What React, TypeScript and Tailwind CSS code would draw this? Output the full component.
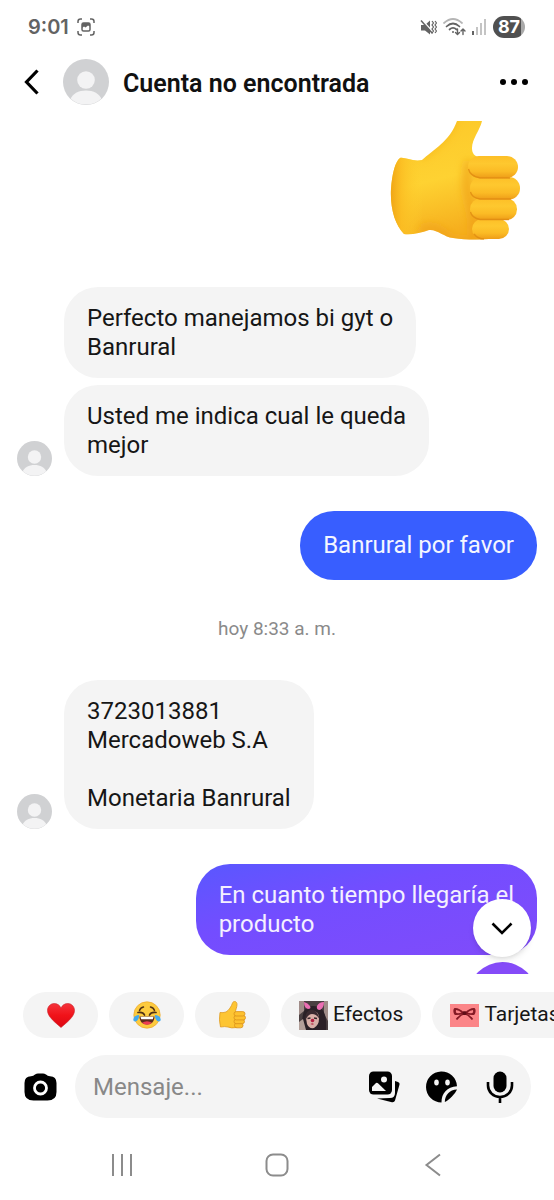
import React from "react";

function Avatar({ className }: { className: string }) {
  return (
    <svg viewBox="0 0 46 46" className={className} role="img" aria-label="Foto de perfil">
      <defs>
        <clipPath id="avatar-clip">
          <circle cx="23" cy="23" r="22.6" />
        </clipPath>
      </defs>
      <circle cx="23" cy="23" r="23" fill="#d0d1d3" />
      <g clipPath="url(#avatar-clip)" fill="#f3f3f4">
        <circle cx="23" cy="21" r="8.8" />
        <path d="M7 41c2.500-6.500 8.500-9.500 16-9.500S36.500 34.500 39 41c-2 4-10 6-16 6S9 45 7 41z" />
      </g>
    </svg>
  );
}

const handOutline =
  "M10 37C15 36 23 41 32 39C43 29 60 20 67 0L71-12L95-12L92 0C90 9 82 18 82 27C82 32 84 35 90 37L108 100L108 117C91 119 78 119 63 117C54 116 47 108 39 109C31 112 21 114 14 113C5 104 0 87 1 68C2 53 5 41 10 37Z";

function BigThumb({ className }: { className: string }) {
  return (
    <svg viewBox="0 0 130 119" className={className} role="img" aria-label="Pulgar arriba">
      <defs>
        <linearGradient id="hand" x1="0" y1="0" x2="0.2" y2="1">
          <stop offset="0" stopColor="#fcc526" />
          <stop offset="0.6" stopColor="#fed232" />
          <stop offset="1" stopColor="#f6b01e" />
        </linearGradient>
        <linearGradient id="cuff" x1="0" y1="0" x2="1" y2="0">
          <stop offset="0" stopColor="#f0a616" />
          <stop offset="0.1" stopColor="#fbbd22" stopOpacity="0.8" />
          <stop offset="0.3" stopColor="#fed32f" stopOpacity="0" />
        </linearGradient>
        <linearGradient id="finger" x1="0" y1="0" x2="0" y2="1">
          <stop offset="0" stopColor="#fdbf27" />
          <stop offset="0.35" stopColor="#fec82f" />
          <stop offset="0.7" stopColor="#fbbb25" />
          <stop offset="1" stopColor="#ee9d18" />
        </linearGradient>
        <filter id="soft" x="-30%" y="-30%" width="160%" height="160%">
          <feGaussianBlur stdDeviation="4" />
        </filter>
        <clipPath id="hand-clip">
          <path d={handOutline} />
        </clipPath>
      </defs>
      <path d={handOutline} fill="url(#hand)" />
      <path d={handOutline} fill="url(#cuff)" />
      <g clipPath="url(#hand-clip)">
        <g filter="url(#soft)" fill="none" stroke="#ee9d18">
          <path d="M80 40Q74 60 80 80T84 120" strokeWidth="9" opacity="0.7" />
          <path d="M30 111Q42 100 60 119L90 121" strokeWidth="7" opacity="0.7" />
          <path d="M30 37Q58 20 66-4" strokeWidth="3" opacity="0.7" />
        </g>
      </g>
      <g fill="url(#finger)">
        <rect x="82" y="98" width="37" height="20" rx="10" />
        <rect x="80" y="77.500" width="47" height="21.500" rx="10.500" />
        <rect x="80" y="56" width="50" height="22.500" rx="11" />
        <rect x="78" y="35" width="50" height="22" rx="11" />
      </g>
      <path
        d="M120 57H90Q80 55 78.500 48M121 78H90Q82 77 80.500 71M119 98.500H90Q82 97 80.500 91M84 113Q88 118 94 118"
        fill="none"
        stroke="#dd8810"
        strokeWidth="1.300"
        opacity="0.75"
      />
    </svg>
  );
}

function SmallThumb() {
  return (
    <svg viewBox="0 0 27 28" className="h-7 w-[27px]" role="img" aria-label="Pulgar arriba">
      <path
        d="M1 11.500Q4 12 7 11C10 9.500 12.500 5 13.500 2 14.500-.500 18 0 18 3.500c0 3-1.500 5-1.500 7.500L18 12v14.500q-6 1-9-.500-3-.800-7.500 0Q-.300 19 1 11.500z"
        fill="#fdc533"
        stroke="#e09a20"
        strokeWidth=".8"
      />
      <g fill="#fdc12f" stroke="#d9911b" strokeWidth=".8">
        <rect x="15.500" y="22" width="8.500" height="4.800" rx="2.300" />
        <rect x="15" y="18.300" width="10.500" height="4.400" rx="2.200" />
        <rect x="15" y="14.500" width="11.500" height="4.400" rx="2.200" />
        <rect x="15" y="10.600" width="11" height="4.400" rx="2.200" />
      </g>
    </svg>
  );
}

function Bubble({ children, className = "" }: { children: React.ReactNode; className?: string }) {
  return (
    <p className={`w-fit whitespace-pre-line rounded-[34px] px-[23px] text-2xl leading-[29px] ${className}`}>
      {children}
    </p>
  );
}

function Incoming({ messages }: { messages: string[] }) {
  return (
    <div className="flex items-end gap-3">
      <Avatar className="size-[35px] shrink-0" />
      <div className="flex flex-col gap-[7px]">
        {messages.map((m) => (
          <Bubble key={m} className="bg-[#f4f4f4] pb-4 pt-[17px] text-[#161616]">
            {m}
          </Bubble>
        ))}
      </div>
    </div>
  );
}

function StatusBar() {
  return (
    <div className="flex h-[54px] shrink-0 items-center justify-between pl-7 pr-[29px] font-['Inter',sans-serif] text-[#636363]">
      <div className="flex items-center gap-2">
        <span className="text-xl font-semibold">9:01</span>
        <svg viewBox="0 0 18 18" className="size-[18px]" fill="none" stroke="currentColor" strokeWidth="1.500" aria-hidden="true">
          <path d="M1 5V3.500Q1 1 3.500 1H5M13 1h1.500Q17 1 17 3.500V5M17 13v1.500Q17 17 14.500 17H13M5 17H3.500Q1 17 1 14.500V13" />
          <rect x="5" y="5" width="8" height="8" rx="1.500" />
          <path d="M5 5h8v3.500L11 7.500 8.500 9.500 7 8.500 5 10z" fill="currentColor" stroke="none" />
        </svg>
      </div>
      <div className="flex items-center gap-[6px]">
        <svg viewBox="0 0 17 17" className="size-[17px]" aria-hidden="true">
          <path d="M1 6h4l5-4.500v14L5 11.500H1z" fill="currentColor" />
          <path d="M2 1l12 13" stroke="#fff" strokeWidth="1.500" />
          <path d="M1 1.500l11.500 13" stroke="currentColor" strokeWidth="1.500" />
          <path d="M12 2l1.500 2L12 6l1.500 2L12 10l1.500 2L12 14M15 2l1.500 2L15 6l1.500 2L15 10l1.500 2L15 14" fill="none" stroke="currentColor" strokeWidth="1.200" />
        </svg>
        <svg viewBox="0 0 23 18" className="h-[18px] w-[23px]" fill="none" stroke="currentColor" strokeWidth="1.700" strokeLinecap="round" aria-hidden="true">
          <path d="M1 5Q10-3 19 5" stroke="#b5b5b5" />
          <path d="M3.500 8.500q6.500-6 13 0M6.500 11.500q3.500-3.200 7 0" />
          <circle cx="10" cy="14" r="1" fill="currentColor" stroke="none" />
          <path d="M14.500 11v5.500m-2-2 2 2 2-2M20 16.500V11m-2 2 2-2 2 2" strokeWidth="1.400" />
        </svg>
        <svg viewBox="0 0 15 16" className="h-4 w-[15px]" fill="#c4c4c4" aria-hidden="true">
          <rect x="0" y="12" width="2" height="4" fill="#636363" />
          <rect x="4" y="8" width="2" height="8" />
          <rect x="8" y="4" width="2" height="12" />
          <rect x="12" y="0" width="2" height="16" />
        </svg>
        <div className="flex h-[22px] w-8 items-center justify-center rounded-full bg-[linear-gradient(to_right,#505050_88%,#a9a9a9_88%)] text-lg font-bold text-white">
          87
        </div>
      </div>
    </div>
  );
}

function Heart() {
  return (
    <svg viewBox="0 0 28 25" className="h-[25px] w-7" role="img" aria-label="Corazón">
      <defs>
        <linearGradient id="heart" x1="0" y1="0" x2="0" y2="1">
          <stop offset="0" stopColor="#f5333b" />
          <stop offset="0.5" stopColor="#f01219" />
          <stop offset="1" stopColor="#dc0812" />
        </linearGradient>
      </defs>
      <path d="M14 24.500C9 20 .500 14 .500 7.500.500 3.500 3.500.500 7.200.500 10.500.500 13 2.500 14 5c1-2.500 3.500-4.500 6.800-4.500 3.700 0 6.700 3 6.700 7C27.500 14 19 20 14 24.500z" fill="url(#heart)" stroke="#c9222a" strokeWidth=".6" />
    </svg>
  );
}

function Laugh() {
  return (
    <svg viewBox="0 0 28 28" className="size-7" role="img" aria-label="Risa con lágrimas">
      <circle cx="14" cy="14" r="13.200" fill="#fdcb3e" stroke="#eca72b" strokeWidth=".7" />
      <path d="M6.500 9.500q1-3 4-3.500M17.500 6q3 .500 4 3.500" fill="none" stroke="#503115" strokeWidth="1.500" strokeLinecap="round" />
      <path d="M5 11.500q5-.800 6.500 2.500M23 11.500q-5-.800-6.500 2.500" fill="none" stroke="#503115" strokeWidth="1.700" strokeLinecap="round" />
      <path d="M6.500 15.500h15c0 5-3.200 8-7.500 8s-7.500-3-7.500-8z" fill="#5d2b1b" />
      <path d="M7.500 15.800h13l-.700 2.500H8.200z" fill="#fff" />
      <path d="M9 21.700q5-3 10 0-2 2.100-5 2.100t-5-2.100z" fill="#ed3d51" />
      <path d="M6.200 14Q.500 14.500.300 18.500c0 3.500 5.700 2.500 5.900-4.500zM21.800 14q5.700.500 5.900 4.500c0 3.500-5.700 2.500-5.900-4.500z" fill="#42a9ed" />
    </svg>
  );
}

function EffectPicture() {
  return (
    <svg viewBox="0 0 29 29" className="size-[29px] shrink-0" aria-hidden="true">
      <rect width="29" height="29" fill="#4b4042" />
      <path d="M0 0h5v10L0 14zM25 0h4v20l-4-7z" fill="#a08c88" />
      <path d="M3 29C3 16 3 5 14 5s14 9 13 24z" fill="#2b2127" />
      <path d="M0 21l4-3 3 11H0z" fill="#b3a09a" />
      <path d="M7 17q0-7 7-7 6 0 6 8 0 6-5 9-5 1-7-4z" fill="#d9b0a8" />
      <path d="M6 20q0-9 5-11 7-2 10 10-3-6-8-6-4 0-7 7z" fill="#3a2a30" />
      <path d="M8.500 17.500l3-.500M15 17l3 .500" stroke="#37252b" strokeWidth="1.500" />
      <circle cx="13.500" cy="19.500" r="1.800" fill="#b31d40" />
      <path d="M11.500 23q1.500-1.500 3.500 0-1.500 1.500-3.500 0z" fill="#b8364c" />
      <path d="M5 1q4 1 6 4 1.500 3-2 3Q5 7 5 1zM18 5q2-4 7-4 0 6-4 8-4 0-3-4z" fill="#ec6fb3" />
    </svg>
  );
}

function CardPicture() {
  return (
    <svg viewBox="0 0 29 23" className="h-[23px] w-[29px] shrink-0" aria-hidden="true">
      <rect width="29" height="23" fill="#fb8588" />
      <path
        fillRule="evenodd"
        d="M14 8.500Q9 3.500 4.500 4C2.500 5.500 3.500 10 5 11q4 .500 9-1.500zM11.500 8.500Q8.500 6 6 6q-.500 2 .500 3 2.500.500 5-.500zM15 8.500q5-5 9.500-4.500c2 1.500 1 6-.500 7q-4 .500-9-1.500zM17.500 8.500Q20.500 6 23 6q.500 2-.500 3-2.500.500-5-.500z"
        fill="#851a25"
      />
      <path d="M13.500 10Q10 11 6.500 15.500M15.500 10q3.500 1 7 5.500" fill="none" stroke="#851a25" strokeWidth="1.800" />
      <rect x="12.700" y="7.300" width="3.600" height="3.600" rx="1" fill="#5f0d17" />
    </svg>
  );
}

const pill = "flex h-[46px] shrink-0 items-center justify-center rounded-full bg-[#f4f4f4]";

export default function App() {
  return (
    <div className="flex h-screen min-h-[700px] flex-col overflow-hidden bg-white font-['Roboto',sans-serif]">
      <StatusBar />

      <header className="mb-[11px] flex h-14 shrink-0 items-center pl-6 pr-[26px]">
        <button type="button" aria-label="Volver" className="mr-6">
          <svg viewBox="0 0 15 26" className="h-[26px] w-[15px]" fill="none" stroke="#000" strokeWidth="3.200" aria-hidden="true">
            <path d="M13.500 1.500L2.500 13l11 11.500" />
          </svg>
        </button>
        <Avatar className="size-[46px] shrink-0" />
        <h1 className="ml-[14px] flex-1 pt-1 text-[25px] font-semibold leading-8 text-[#111]">Cuenta no encontrada</h1>
        <button type="button" aria-label="Más opciones">
          <svg viewBox="0 0 28 6" className="h-[6px] w-7" aria-hidden="true">
            <circle cx="3" cy="3" r="3" />
            <circle cx="14" cy="3" r="3" />
            <circle cx="25" cy="3" r="3" />
          </svg>
        </button>
      </header>

      <div className="relative flex min-h-0 flex-1 flex-col">
        <main className="flex min-h-0 flex-1 flex-col gap-[35px] overflow-hidden px-[17px] *:shrink-0">
          <BigThumb className="mb-3 mr-[17px] h-[119px] w-[130px] self-end" />
          <Incoming messages={["Perfecto manejamos bi gyt o\nBanrural", "Usted me indica cual le queda\nmejor"]} />
          <Bubble className="self-end bg-[#385eff] py-5 text-[#f4f6ff]">Banrural por favor</Bubble>
          <time className="mb-[2px] self-center text-[19px] leading-7 text-[#8a8a8a]">hoy 8:33 a. m.</time>
          <Incoming messages={["3723013881\nMercadoweb S.A\n\nMonetaria Banrural"]} />
          <div className="flex flex-col items-end gap-[7px]">
            <Bubble className="bg-linear-to-br from-[#5957ff] via-[#734dff] via-40% to-[#814bfa] pb-4 pt-[17px] text-[#f4f0ff]">
              {"En cuanto tiempo llegaría el\nproducto"}
            </Bubble>
            <div className="h-[69px] w-[69px] rounded-full bg-[#854bf8]" />
          </div>
        </main>
        <button
          type="button"
          aria-label="Ir al final"
          className="absolute bottom-[17px] right-[23px] flex size-[58px] items-center justify-center rounded-full bg-white shadow-md"
        >
          <svg viewBox="0 0 22 13" className="h-[13px] w-[22px]" fill="none" stroke="#000" strokeWidth="2.600" aria-hidden="true">
            <path d="M1.500 1.500L11 11l9.500-9.500" />
          </svg>
        </button>
      </div>

      <div className="flex shrink-0 gap-[11px] overflow-hidden pl-[23px] pt-[18px] text-[21px] text-[#161616]">
        <button type="button" className={`${pill} w-[75px]`}>
          <Heart />
        </button>
        <button type="button" className={`${pill} w-[75px]`}>
          <Laugh />
        </button>
        <button type="button" className={`${pill} w-[75px]`}>
          <SmallThumb />
        </button>
        <button type="button" className={`${pill} gap-[5px] px-[18px]`}>
          <EffectPicture />
          Efectos
        </button>
        <button type="button" className={`${pill} gap-[5px] px-[18px]`}>
          <CardPicture />
          Tarjetas
        </button>
      </div>

      <form className="mt-[17px] flex shrink-0 items-center gap-[18px] pl-6 pr-[23px]">
        <button type="button" aria-label="Cámara">
          <svg viewBox="0 0 33 28" className="h-7 w-[33px]" aria-hidden="true">
            <path d="M7 3.200Q9.500 3 11 1.500 12.500.500 14 .500h5q1.500 0 3 1 1.500 1.500 4 1.700 6.500.300 6.500 6.800v9q0 8.500-9 8.500h-14Q.500 27.500.500 19v-9Q.500 3.500 7 3.200z" />
            <circle cx="16.500" cy="15" r="6" fill="none" stroke="#fff" strokeWidth="2.800" />
          </svg>
        </button>
        <div className="flex h-[63px] min-w-0 flex-1 items-center rounded-full bg-[#f4f4f4] pl-[18px] pr-[15px]">
          <input
            type="text"
            aria-label="Mensaje"
            placeholder="Mensaje..."
            className="min-w-0 flex-1 bg-transparent text-2xl text-[#161616] outline-none placeholder:text-[#888]"
          />
          <div className="flex shrink-0 items-center gap-[26px]">
            <button type="button" aria-label="Galería">
              <svg viewBox="0 0 32 32" className="size-8" aria-hidden="true">
                <rect x="1" y="0.500" width="23" height="23" rx="4.500" />
                <path d="M27 10l3 1q2 .700 1.500 2.500l-4.500 16q-.600 2-3 1.700L9 27.500 22 27q5 0 5-5z" />
                <circle cx="16" cy="8.500" r="3" fill="#f4f4f4" />
                <path d="M4 20v-4l4-4q1-.700 2 .200L18 20z" fill="#f4f4f4" />
              </svg>
            </button>
            <button type="button" aria-label="Stickers">
              <svg viewBox="0 0 32 32" className="size-8" aria-hidden="true">
                <path d="M31 15.200A15.500 15.500 0 1 0 15.500 31.500C15.500 22 21 16 31 15.200z" />
                <path d="M31 18.500C23.500 19 19 23.500 18.800 31 22.500 29.500 29.500 22.500 31 18.500z" />
                <ellipse cx="10.500" cy="11.500" rx="2.300" ry="3" fill="#f4f4f4" />
                <ellipse cx="21.500" cy="11.500" rx="2.300" ry="3" fill="#f4f4f4" />
              </svg>
            </button>
            <button type="button" aria-label="Grabar audio">
              <svg viewBox="0 0 32 32" className="size-8" aria-hidden="true">
                <rect x="9.500" y="0.500" width="13" height="21" rx="6.500" />
                <path d="M4 11v3.500a12 11.500 0 0 0 24 0V11M16 26v6" fill="none" stroke="#000" strokeWidth="2.600" />
              </svg>
            </button>
          </div>
        </div>
      </form>

      <nav className="mt-3 flex h-[70px] shrink-0 items-center justify-center gap-[132px]">
        <button type="button" aria-label="Recientes">
          <svg viewBox="0 0 24 24" className="size-6" fill="none" stroke="#8c8c8c" strokeWidth="2" aria-hidden="true">
            <path d="M4 1v22M13 1v22M22 1v22" />
          </svg>
        </button>
        <button type="button" aria-label="Inicio">
          <svg viewBox="0 0 24 24" className="size-6" fill="none" stroke="#8c8c8c" strokeWidth="2" aria-hidden="true">
            <rect x="1.500" y="1.500" width="21" height="21" rx="6.500" />
          </svg>
        </button>
        <button type="button" aria-label="Atrás">
          <svg viewBox="0 0 24 24" className="size-6" fill="none" stroke="#8c8c8c" strokeWidth="2" aria-hidden="true">
            <path d="M19 1.500L5.500 12 19 22.500" />
          </svg>
        </button>
      </nav>
    </div>
  );
}
